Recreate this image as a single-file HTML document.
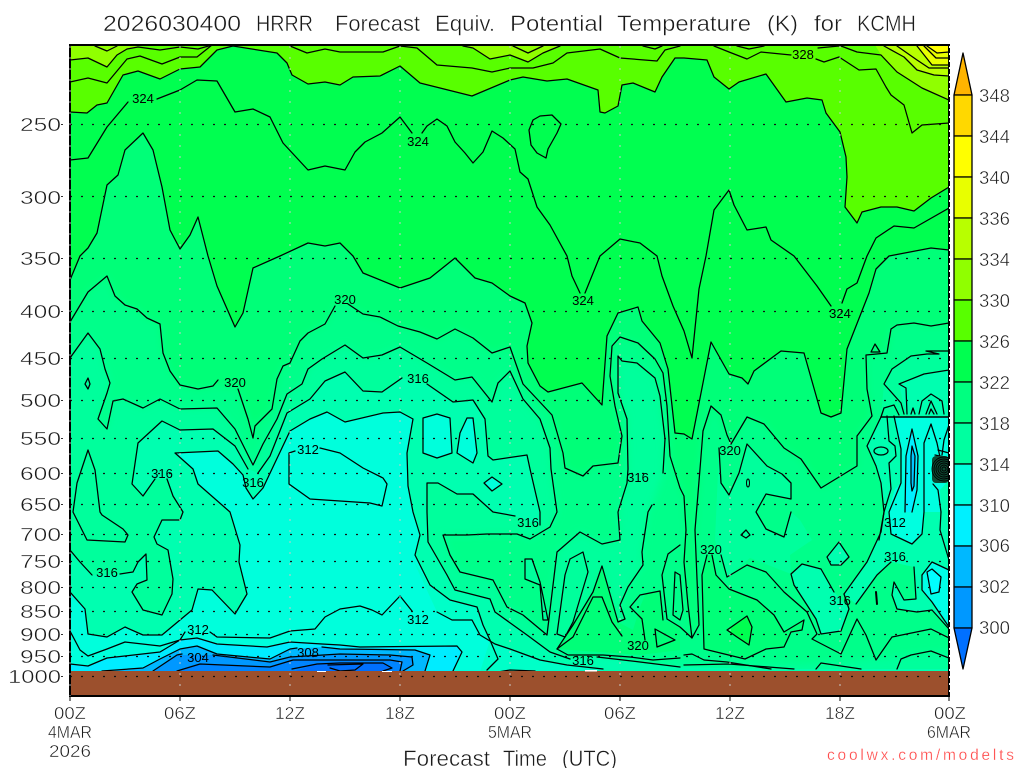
<!DOCTYPE html>
<html><head><meta charset="utf-8"><title>HRRR Forecast</title>
<style>
html,body{margin:0;padding:0;background:#fff;width:1024px;height:768px;overflow:hidden}
svg{display:block}
text{font-family:"Liberation Sans",sans-serif;fill:#1a1a1a}
.t text,text.t{stroke:#fff;stroke-width:.45}
.c{font-size:13px;fill:#000;text-anchor:middle}
.l polyline,.l polygon{fill:none;stroke:#000;stroke-width:1.25;stroke-linejoin:round;stroke-linecap:round}
</style></head><body>
<svg width="1024" height="768" viewBox="0 0 1024 768" xmlns="http://www.w3.org/2000/svg">
<defs><clipPath id="p"><rect x="70" y="45" width="879" height="651"/></clipPath>
<filter id="b" x="-5%" y="-5%" width="110%" height="110%"><feGaussianBlur stdDeviation="4"/></filter></defs>
<rect width="1024" height="768" fill="#fff"/>
<g clip-path="url(#p)">
<rect x="70" y="45" width="879" height="651" fill="#00ffb0"/>
<!-- cyan main -->
<polygon fill="#00ffdc" points="70,592 85,609 88,634 107,637 125,627 143,635 162,635 180,620 192,610 198,589 212,590 235,614 247,594 239,562 240,545 230,512 198,484 193,469 175,453 218,451 233,464 243,475 246,488 253,499 263,488 290,431 310,419 327,412 345,422 383,413 400,412 413,419 407,453 408,486 413,512 420,535 415,555 430,585 450,600 477,607 483,625 490,640 498,659 487,670 500,672 70,672"/>
<polygon fill="#00ffc8" points="413,560 437,612 452,620 472,620 480,635 495,644 510,649 540,660 567,665 603,669 603,672 480,672 490,640 477,607 450,600 430,585"/>
<polygon fill="#00ffdc" points="423,418 437,414 450,418 452,453 437,458 423,453"/>
<polygon fill="#00ffdc" points="457,453 460,433 467,418 473,418 477,453 473,463"/>
<polygon fill="#00ffdc" points="484,483 492,477 502,484 492,491"/>
<!-- warm fills -->
<polygon fill="#00ff9c" points="70,45 70,550 80,562 92,575 120,574 133,572 138,562 146,554 147,580 137,584 132,592 143,610 162,615 172,594 173,579 168,550 157,544 154,537 162,520 180,520 183,512 173,496 167,479 155,479 143,496 132,484 138,443 162,421 180,430 213,429 235,446 248,469 258,473 270,456 287,413 310,399 325,381 345,372 363,391 382,392 402,378 427,384 453,402 473,400 485,419 488,456 493,460 527,455 530,469 540,512 540,525 515,516 493,512 473,494 457,494 438,483 427,483 427,512 428,542 447,575 455,590 490,599 495,612 527,635 550,652 570,659 597,657 640,662 680,667 771,669 949,669 949,45"/>
<g filter="url(#b)">
<polygon fill="#00ff8a" points="60,358 70,358 88,333 100,349 105,369 110,383 107,393 98,419 107,429 113,401 123,399 143,408 160,399 180,409 217,408 235,429 253,465 263,444 277,419 287,394 302,384 308,369 322,359 345,345 363,358 382,355 400,347 427,363 455,380 472,377 492,402 498,383 510,371 523,399 540,419 550,448 551,469 557,512 550,527 530,539 517,534 487,534 467,535 443,535 450,555 460,572 493,580 507,607 523,615 547,635 557,552 580,532 602,544 620,540 618,512 627,483 628,469 627,419 618,393 618,356 622,361 637,363 655,378 660,396 665,439 663,473 652,505 648,512 642,552 643,565 628,587 620,605 625,619 618,622 602,566 593,592 573,625 560,645 568,655 603,655 630,657 653,660 680,658 704,660 745,662 800,665 860,660 960,650 960,35 60,35"/>
<polygon fill="#00ff78" points="60,322 70,322 88,292 107,276 115,296 125,305 137,309 147,318 160,324 163,353 170,371 180,385 198,389 213,386 238,389 248,419 253,438 255,426 272,409 277,379 283,366 290,363 300,341 308,333 325,324 335,306 348,304 363,314 380,317 398,326 420,332 437,339 455,329 473,338 492,353 510,347 523,384 552,415 563,453 565,468 583,476 593,466 618,463 622,436 615,406 610,376 612,346 620,337 638,343 655,359 663,373 667,406 670,456 680,488 684,496 686,530 684,562 688,605 692,638 699,625 697,579 695,530 700,469 703,431 711,406 721,415 727,435 731,444 747,417 764,424 784,448 801,459 821,488 857,466 857,436 872,416 867,389 866,355 887,353 891,329 897,325 914,323 931,326 960,323 960,35 60,35"/>
</g>
<polygon fill="#00ff9c" points="557,634 565,575 570,559 583,552 588,572 573,622 565,637"/>
<polygon fill="#00ff9c" points="525,559 532,559 540,582 548,620 543,620 540,585 525,579"/>
<polygon fill="#00ff50" points="70,280 75,268 80,256 88,248 97,233 107,185 118,175 125,150 143,133 153,150 162,187 170,230 180,249 190,235 198,217 208,256 217,286 235,327 243,313 253,268 280,256 308,243 325,246 340,243 353,256 363,273 400,288 430,278 455,258 475,278 492,283 510,296 525,303 532,323 527,346 528,363 540,386 548,392 582,383 602,405 607,336 618,313 638,307 642,321 660,343 668,369 675,433 684,434 692,439 711,342 729,374 742,378 748,384 754,371 781,351 804,353 821,413 831,417 841,413 847,349 869,293 876,269 887,258 889,256 931,248 949,250 949,45 70,45"/>
<polygon fill="#58ff00" points="70,112 87,113 97,105 107,103 123,75 138,71 160,79 180,69 200,67 217,50 233,46 277,53 287,63 292,75 308,84 325,82 340,85 353,77 380,76 400,66 420,83 472,96 510,80 523,77 547,81 567,79 598,90 600,112 605,113 618,106 622,85 633,83 655,92 662,77 675,58 684,58 707,60 714,77 729,89 739,82 766,74 786,102 807,98 822,100 826,113 840,132 846,157 847,177 845,207 857,223 862,212 881,207 897,207 914,211 931,198 949,187 949,45 70,45"/>
<polygon fill="#90ff00" points="70,45 70,60 88,58 107,67 117,55 127,49 138,47 135,45"/>
<polygon fill="#90ff00" points="463,45 473,48 490,59 510,55 528,62 543,53 560,45"/>
<polygon fill="#90ff00" points="875,45 881,55 897,72 922,88 949,100 949,45"/>
<polygon fill="#b8ff00" points="884,45 904,57 917,70 934,75 949,76 949,45"/>
<polygon fill="#e8ff00" points="917,45 932,65 949,65 949,45"/>
<polygon fill="#ffff00" points="927,45 937,53 949,52 949,45"/>
<!-- right side pale patches -->
<polygon fill="#00ff9c" points="719,450 721,483 729,495 739,473 747,444 767,466 782,474 791,483 791,499 766,494 756,512 766,529 784,537 791,512 800,520 812,540 790,555 791,574 750,558 727,577 715,540"/>
<polygon fill="#00ff78" points="707,555 702,575 704,649 745,659 766,649 784,647 791,632 802,630 804,620 784,632 774,615 757,600 729,589 716,575 712,555"/>
<polygon fill="#00ff50" points="727,630 747,616 752,627 749,645 737,637"/>
<polygon fill="#00ff50" points="655,629 675,640 657,647"/>
<polygon fill="#00ff78" points="557,649 573,625 593,592 602,566 618,622 633,630 640,607 645,595 660,591 663,620 680,627 680,650 640,655 600,652"/>
<polygon fill="#00ff9c" points="884,384 892,369 911,356 949,351 949,417 881,417"/>
<polygon fill="#00ffb0" points="899,384 924,374 949,370 949,417 906,415"/>
<polygon fill="#00ffb0" points="844,594 867,562 881,532 884,512 881,483 876,466 867,446 881,417 949,417 949,629 932,610 917,612 897,609 892,595 894,582 904,600 916,599 914,567 891,562 877,575 856,604"/>
<polygon fill="#00ffb0" points="791,574 802,564 821,569 834,592 849,609 841,631 821,634 816,619 807,605 794,585"/>
<polygon fill="#00ffb0" points="827,557 839,542 849,557 841,565 831,565"/>
<polygon fill="#00ffe0" points="892,417 949,417 949,480 940,490 941,512 924,512 922,534 912,544 891,534 888,512 895,489 901,483 901,449 894,416"/>
<polygon fill="#00f0ff" points="906,456 912,429 918,456 917,490 912,512 905,512"/>
<polygon fill="#00c8ff" points="911,456 912,446 915,456 914,486 912,491 911,483"/>
<polygon fill="#00ffe8" points="922,575 932,562 949,570 949,627 932,602 922,590"/>
<polygon fill="#00ffff" points="927,572 932,569 941,577 939,592 931,594"/>
<!-- cold -->
<polygon fill="#00ecff" points="70,664 88,666 107,658 160,652 180,640 197,638 217,644 267,647 290,642 322,644 340,645 360,647 457,646 462,652 453,672 70,672"/>
<polygon fill="#00b8ff" points="102,672 143,668 160,659 180,649 197,646 217,654 270,659 290,649 322,647 340,649 415,650 430,655 425,672"/>
<polygon fill="#0098ff" points="153,672 177,655 213,655 270,662 290,657 322,655 340,654 390,655 412,657 413,665 403,672"/>
<polygon fill="#0084ff" points="177,672 200,664 270,667 293,660 340,660 390,660 402,662 400,672"/>
<polygon fill="#0070ff" points="292,672 317,664 340,663 383,663 392,668 383,672"/>
<!-- contour lines -->
<g class="l">
<polyline points="95,46 107,51 117,46"/>
<polyline points="70,60 88,58 107,67 117,55 127,49 138,47 160,50 180,47 198,49 212,45"/>
<polyline points="70,82 88,78 107,83 127,59 140,56 162,64 180,57 197,57 212,45"/>
<polyline points="70,112 87,113 97,105 107,103 123,75 138,71 160,79 180,69 200,67 217,50 233,46 277,53 287,63 292,75 308,84 325,82 340,85 353,77 380,76 400,66 420,83 472,96 510,80 523,77 547,81 567,79 598,90 600,112 605,113 618,106 622,85 633,83 655,92 662,77 675,58 684,58 707,60 714,77 729,89 739,82 766,74 786,102 807,98 822,100 826,113 840,132 846,157 847,177 845,207 857,223 862,212 881,207 897,207 914,211 931,198 949,187"/>
<polyline points="290,46 307,53 325,49 340,52 383,52 400,46 417,48 437,65 472,68 492,72 510,68 533,68 553,63 567,53 600,49 620,58 657,61 665,50 680,46"/>
<polyline points="463,46 473,48 490,59 510,55 528,62 543,53 560,46"/>
<polyline points="513,46 528,53 543,46"/>
<polyline points="643,46 655,49 662,46"/>
<polyline points="737,46 749,49 764,46"/>
<polyline points="818,48 839,46"/>
<polyline points="714,46 729,52 747,59 761,52 791,55"/>
<polyline points="816,59 824,62 839,57 859,70 876,69 886,87 891,95 904,105 912,133 922,125 949,123"/>
<polyline points="841,46 857,52 881,55 897,72 922,88 949,100"/>
<polyline points="884,46 904,57 917,70 934,75 949,76"/>
<polyline points="897,46 917,60 929,68 949,68"/>
<polyline points="917,46 932,65 949,65"/>
<polyline points="924,46 936,58 949,58"/>
<polyline points="927,46 937,53 949,52"/>
<polyline points="70,160 88,158 107,127 128,102"/>
<polyline points="157,99 180,90 197,80 217,81 235,112 253,109 270,117 283,143 308,170 325,166 345,170 355,152 365,142 382,133 400,117 412,133"/>
<polyline points="422,133 427,126 437,119 447,126 455,142 465,153 473,163 483,152 492,131 503,138 515,149 520,172 528,179 537,207 550,225 567,256 572,276 580,293"/>
<polyline points="585,293 600,256 620,239 640,243 657,256 662,276 673,306 684,331 692,358 699,289 706,256 714,210 729,190 734,205 747,230 766,227 771,240 794,256 817,286 831,306"/>
<polyline points="842,303 847,289 857,283 867,256 876,238 894,226 914,228 949,208"/>
<polygon points="540,116 552,115 561,124 557,133 548,149 546,158 537,153 531,145 529,130 533,120"/>
<polyline points="70,280 75,268 80,256 88,248 97,233 107,185 118,175 125,150 143,133 153,150 162,187 170,230 180,249 190,235 198,217 208,256 217,286 235,327 243,313 253,268 280,256 308,243 325,246 340,243 353,256 363,273 400,288 430,278 455,258 475,278 492,283 510,296 525,303 532,323 527,346 528,363 540,386 548,392 582,383 602,405 607,336 618,313 638,307 642,321 660,343 668,369 675,433 684,434 692,439 711,342 729,374 742,378 748,384 754,371 781,351 804,353 821,413 831,417 841,413 847,349 869,293 876,269 887,258 889,256 931,248 949,250"/>
<polyline points="70,322 88,292 107,276 115,296 125,305 137,309 147,318 160,324 163,353 170,371 180,385 198,389 213,386 218,380"/>
<polyline points="238,389 248,419 253,438 255,426 272,409 277,379 283,366 290,363 300,341 308,333 325,324 335,306"/>
<polyline points="348,304 363,314 380,317 398,326 420,332 437,339 455,329 473,338 492,353 510,347 523,384 552,415 563,453 565,468 583,476 593,466 618,463 622,436 615,406 610,376 612,346 620,337 638,343 655,359 663,373 667,406 670,456 680,488 684,496 686,530 684,562 688,605 692,638 699,625 697,579 695,530 700,469 703,431 711,406 721,415 727,435 731,444"/>
<polyline points="731,444 747,417 764,424 784,448 801,459 821,488 857,466 857,436 872,416 867,389 866,355 887,353 891,329 897,325 914,323 931,326 949,323"/>
<polyline points="70,358 88,333 100,349 105,369 110,383 107,393 98,419 107,429 113,401 123,399 143,408 160,399 180,409 217,408 235,429 253,465 263,444 277,419 287,394 302,384 308,369 322,359 345,345 363,358 382,355 400,347 427,363 455,380 472,377 492,402 498,383 510,371 523,399 540,419 550,448 551,469 557,512 550,527 530,539 517,534 487,534 467,535 443,535 450,555 460,572 493,580 507,607 523,615 547,635 557,552 580,532 602,544 620,540 618,512 627,483 628,469 627,419 618,393 618,356 622,361 637,363 655,378 660,396 665,439 663,473"/>
<polyline points="652,505 648,512 642,552 643,565 628,587 620,605 625,619 618,622 602,566 593,592 573,625 557,649 568,655 603,655 630,657 653,660 680,658"/>
<polyline points="70,550 80,562 92,575"/>
<polyline points="120,574 133,572 138,562 146,554 147,580 137,584 132,592 143,610 162,615 172,594 173,579 168,550 157,544 154,537 162,520 180,520 183,512 173,496 167,479"/>
<polyline points="155,479 143,496 132,484 138,443 162,421 180,430 213,429 235,446 248,469"/>
<polyline points="258,473 270,456 287,413 310,399 325,381 345,372 363,391 382,392 402,378"/>
<polyline points="427,384 453,402 473,400 485,419 488,456 493,460 527,455 530,469 540,512 540,525"/>
<polyline points="515,516 493,512 473,494 457,494 438,483 427,483 427,512 428,542 447,575 455,590 490,599 495,612 527,635 550,652 570,659"/>
<polyline points="597,657 640,662 680,667"/>
<polygon points="557,634 565,575 570,559 583,552 588,572 573,622 565,637"/>
<polygon points="525,559 532,559 540,582 548,620 543,620 540,585 525,579"/>
<polyline points="70,592 85,609 88,634 107,637 125,627 143,635 162,635 180,620 192,610 198,589 212,590 235,614 247,594 239,562 240,545 230,512 198,484 193,469 175,453 218,451 233,464 243,475 246,488 253,499 263,488 290,431 310,419 327,412 345,422 383,413 400,412 413,419 407,453 408,486 413,512 420,535 415,555 430,585 450,600 477,607 483,625 490,640 498,659 487,670"/>
<polygon points="423,418 437,414 450,418 452,453 437,458 423,453"/>
<polygon points="457,453 460,433 467,418 473,418 477,453 473,463"/>
<polygon points="484,483 492,477 502,484 492,491"/>
<polygon points="498,672 510,670 535,671"/>
<polyline points="295,451 289,453 289,484 310,499 340,501 370,503 382,506 387,484 383,478 363,468 340,453 320,448"/>
<polygon points="88,378 90,384 88,389 85,384"/>
<polygon points="88,450 77,483 73,512 87,540 125,542 128,535 123,529 102,515 100,512 95,470"/>
<polyline points="70,631 80,650 88,656 107,649 125,642 160,646 180,640 185,632"/>
<polyline points="210,632 217,637 270,638 290,631 315,629 325,617 340,609 360,606 372,610 382,615 400,596 412,611"/>
<polyline points="437,612 452,620 472,620 480,635 495,644 510,649 540,660 567,665 603,669"/>
<polyline points="70,664 88,666 107,658 160,652 180,640 197,638 217,644 267,647 290,642 322,644 340,645 360,647 457,646 462,652 453,671"/>
<polyline points="102,671 143,668 160,659 180,649 197,646 217,654 270,659 290,649 297,648"/>
<polyline points="322,647 340,649 415,650 430,655 425,671"/>
<polyline points="153,671 177,655 182,654"/>
<polyline points="213,655 270,662 290,657 340,654 390,655 412,657 413,665 403,671"/>
<polyline points="177,671 200,664 270,667 293,660 340,660 390,660 402,662 400,671"/>
<polyline points="292,669 317,664 340,663 383,663 392,668 383,671"/>
<polyline points="328,665 363,664 355,670 340,671 330,668" />
<!-- right complex -->
<polygon points="871,352 875,344 880,352"/>
<polyline points="881,417 884,408 894,405 899,415"/>
<polyline points="881,417 949,417" style="stroke-width:1.6"/>
<polyline points="904,414 901,403 884,384 892,369 911,356 927,354 939,354 926,351 949,351"/>
<polyline points="907,414 906,388 899,384 924,374 949,370"/>
<polyline points="919,414 922,401 931,394 942,401 944,414"/>
<polyline points="926,414 931,401 937,414"/>
<polyline points="929,414 931,409 934,414"/>
<polyline points="911,414 913,408 915,414"/>
<polyline points="881,417 867,446 876,466 881,483 884,512 881,532 867,562 844,594"/>
<ellipse cx="881" cy="451" rx="7" ry="4" fill="none" stroke="#000" stroke-width="1.25"/>
<polyline points="887,416 889,441 895,446 896,456 889,463 891,489 884,512 879,540"/>
<polyline points="894,416 901,449 901,483 889,512 891,534 912,544 922,534 924,512 924,443 931,424 937,443 941,462"/>
<polyline points="905,512 906,456 912,429 918,456 917,490 912,512"/>
<polygon points="911,456 912,446 915,456 914,486 912,491 911,483"/>
<polyline points="941,512 938,490 933,484"/>
<polyline points="949,425 944,440 942,455"/>
<polyline points="935,455 949,458"/>
<polyline points="938,450 949,453"/>
<polyline points="856,604 877,575 891,562"/>
<polyline points="914,567 916,599 904,600 894,582 892,595 897,609 917,612 932,610 949,629"/>
<polyline points="941,512 940,530 949,560"/>
<polyline points="844,594 849,609 841,631 821,634 816,619 807,605 794,585 791,574 802,564 821,569 834,592"/>
<polygon points="827,557 839,542 849,557 841,565 831,565"/>
<polygon points="741,535 746,530 750,535 746,538"/>
<ellipse cx="748" cy="483" rx="1.5" ry="4" fill="none" stroke="#000" stroke-width="1"/>
<polyline points="922,575 932,562 949,570"/>
<polyline points="949,627 932,602 922,590 922,575"/>
<polygon points="927,572 932,569 941,577 939,592 931,594"/>
<polyline points="876,592 877,604" style="stroke-width:2"/>
<polyline points="719,448 721,483 729,495 739,473 747,444 767,466 782,474 791,483 791,499 766,494 756,512 766,529 784,537 791,512"/>
<polyline points="721,555 727,577 747,565 766,572 784,592 807,612 817,634 812,639 841,654 857,619 866,635 876,660 892,637 931,629 949,638"/>
<polyline points="707,555 702,575 704,649 745,659 766,649 784,647 791,632 802,630 804,620 784,632 774,615 757,600 729,589 716,575 712,555"/>
<polygon points="727,630 747,616 752,627 749,645 737,637"/>
<polygon points="655,629 675,640 657,647"/>
<polyline points="680,545 668,554 662,575 667,619 680,627 692,638"/>
<polyline points="675,572 673,615 680,620 683,610 680,575 675,572"/>
<polyline points="630,607 640,595 660,591 663,620"/>
<polyline points="630,607 642,619 645,640"/>
<polyline points="557,649 573,637 593,597 602,597 612,622 622,636"/>
<polyline points="684,655 692,654 704,660 727,662 771,669"/>
<polyline points="684,665 729,664 794,669"/>
<polyline points="816,669 821,663 861,669"/>
<polyline points="897,669 901,659 911,655 931,651 949,658"/>
<circle cx="638" cy="607" r="1" fill="#000"/>
<!-- dense blob -->
<rect x="932" y="456" width="17" height="27" rx="4" fill="#0d4a32" stroke="none"/>
<g fill="none" stroke="#000" stroke-width=".9">
<circle cx="944" cy="469" r="2"/><circle cx="944" cy="469" r="4"/><circle cx="944" cy="469" r="6"/><circle cx="944" cy="469" r="8"/><circle cx="944" cy="469" r="10"/><circle cx="944" cy="469" r="12"/>
</g>
</g>
</g>
<!-- ground -->
<rect x="70" y="671" width="879" height="25" fill="#9c502d"/>
<rect x="317" y="671" width="9" height="1" fill="#fff"/><rect x="382" y="671" width="10" height="1" fill="#fff"/><rect x="585" y="670" width="12" height="1.5" fill="#fff"/>
<!-- grid -->
<g stroke="#111" stroke-width="1.2" stroke-dasharray="2 9" fill="none">
<path d="M70 124.5H949M70 196.5H949M70 258.5H949M70 311.5H949M70 358.5H949M70 400.5H949M70 438.5H949M70 473.5H949M70 504.5H949M70 534.5H949M70 561.5H949M70 587.5H949M70 611.5H949M70 634.5H949M70 656.5H949M70 676.5H949"/>
</g>
<g stroke="#c8c8c8" stroke-width="1" stroke-dasharray="2 9" fill="none">
<path d="M180 46V696M290 46V696M400 46V696M510 46V696M620 46V696M730 46V696M840 46V696"/>
</g>
<!-- frame -->
<rect x="69" y="44" width="881" height="2" fill="#000"/>
<rect x="69" y="695" width="881" height="2" fill="#000"/>
<rect x="69" y="44" width="2" height="653" fill="#000"/>
<rect x="948" y="44" width="2" height="653" fill="#000"/>
<path d="M70 46V696" stroke="#aaa" stroke-width="1" stroke-dasharray="2 9"/>
<path d="M949.500 46V696" stroke="#fff" stroke-width="1" stroke-dasharray="2 5"/>
<!-- x ticks -->
<path d="M70 697v4M180 697v4M290 697v4M400 697v4M510 697v4M620 697v4M730 697v4M840 697v4M949 697v4" stroke="#000" stroke-width="1"/>
<!-- y ticks -->
<g fill="#333"><rect x="61" y="124" width="2" height="1"/><rect x="61" y="196" width="2" height="1"/><rect x="61" y="258" width="2" height="1"/><rect x="61" y="311" width="2" height="1"/><rect x="61" y="358" width="2" height="1"/><rect x="61" y="400" width="2" height="1"/><rect x="61" y="438" width="2" height="1"/><rect x="61" y="473" width="2" height="1"/><rect x="61" y="504" width="2" height="1"/><rect x="61" y="534" width="2" height="1"/><rect x="61" y="561" width="2" height="1"/><rect x="61" y="587" width="2" height="1"/><rect x="61" y="611" width="2" height="1"/><rect x="61" y="634" width="2" height="1"/><rect x="61" y="656" width="2" height="1"/><rect x="61" y="676" width="2" height="1"/></g>
<!-- contour labels -->
<text class="c" x="143" y="103">324</text>
<text class="c" x="418" y="146">324</text>
<text class="c" x="583" y="305">324</text>
<text class="c" x="840" y="318">324</text>
<text class="c" x="803" y="59">328</text>
<text class="c" x="345" y="304">320</text>
<text class="c" x="235" y="387">320</text>
<text class="c" x="418" y="383">316</text>
<text class="c" x="162" y="478">316</text>
<text class="c" x="253" y="487">316</text>
<text class="c" x="308" y="454">312</text>
<text class="c" x="730" y="455">320</text>
<text class="c" x="638" y="482">316</text>
<text class="c" x="528" y="527">316</text>
<text class="c" x="895" y="527">312</text>
<text class="c" x="711" y="554">320</text>
<text class="c" x="895" y="561">316</text>
<text class="c" x="107" y="577">316</text>
<text class="c" x="840" y="605">316</text>
<text class="c" x="418" y="624">312</text>
<text class="c" x="198" y="634">312</text>
<text class="c" x="638" y="650">320</text>
<text class="c" x="198" y="662">304</text>
<text class="c" x="308" y="657">308</text>
<text class="c" x="583" y="665">316</text>
<!-- title -->
<g class="t" font-size="22.500">
<text x="103" y="31" textLength="138" lengthAdjust="spacingAndGlyphs">2026030400</text>
<text x="256" y="31" textLength="57" lengthAdjust="spacingAndGlyphs">HRRR</text>
<text x="335" y="31" textLength="85" lengthAdjust="spacingAndGlyphs">Forecast</text>
<text x="435" y="31" textLength="60" lengthAdjust="spacingAndGlyphs">Equiv.</text>
<text x="510" y="31" textLength="93" lengthAdjust="spacingAndGlyphs">Potential</text>
<text x="617" y="31" textLength="134" lengthAdjust="spacingAndGlyphs">Temperature</text>
<text x="767" y="31" textLength="31" lengthAdjust="spacingAndGlyphs">(K)</text>
<text x="814" y="31" textLength="28" lengthAdjust="spacingAndGlyphs">for</text>
<text x="857" y="31" textLength="59" lengthAdjust="spacingAndGlyphs">KCMH</text>
</g>
<!-- y labels -->
<g class="t" font-size="18.500" >
<text x="20" y="131" textLength="41" lengthAdjust="spacingAndGlyphs">250</text>
<text x="20" y="204" textLength="41" lengthAdjust="spacingAndGlyphs">300</text>
<text x="20" y="265" textLength="41" lengthAdjust="spacingAndGlyphs">350</text>
<text x="20" y="318" textLength="41" lengthAdjust="spacingAndGlyphs">400</text>
<text x="20" y="365" textLength="41" lengthAdjust="spacingAndGlyphs">450</text>
<text x="20" y="407" textLength="41" lengthAdjust="spacingAndGlyphs">500</text>
<text x="20" y="445" textLength="41" lengthAdjust="spacingAndGlyphs">550</text>
<text x="20" y="480" textLength="41" lengthAdjust="spacingAndGlyphs">600</text>
<text x="20" y="511" textLength="41" lengthAdjust="spacingAndGlyphs">650</text>
<text x="20" y="541" textLength="41" lengthAdjust="spacingAndGlyphs">700</text>
<text x="20" y="568" textLength="41" lengthAdjust="spacingAndGlyphs">750</text>
<text x="20" y="594" textLength="41" lengthAdjust="spacingAndGlyphs">800</text>
<text x="20" y="618" textLength="41" lengthAdjust="spacingAndGlyphs">850</text>
<text x="20" y="641" textLength="41" lengthAdjust="spacingAndGlyphs">900</text>
<text x="20" y="663" textLength="41" lengthAdjust="spacingAndGlyphs">950</text>
<text x="8" y="683" textLength="53" lengthAdjust="spacingAndGlyphs">1000</text>
</g>
<!-- x labels -->
<g class="t" font-size="17.500">
<text x="54" y="719" textLength="32" lengthAdjust="spacingAndGlyphs">00Z</text>
<text x="164" y="719" textLength="32" lengthAdjust="spacingAndGlyphs">06Z</text>
<text x="275" y="719" textLength="30" lengthAdjust="spacingAndGlyphs">12Z</text>
<text x="385" y="719" textLength="30" lengthAdjust="spacingAndGlyphs">18Z</text>
<text x="494" y="719" textLength="32" lengthAdjust="spacingAndGlyphs">00Z</text>
<text x="604" y="719" textLength="32" lengthAdjust="spacingAndGlyphs">06Z</text>
<text x="715" y="719" textLength="30" lengthAdjust="spacingAndGlyphs">12Z</text>
<text x="825" y="719" textLength="30" lengthAdjust="spacingAndGlyphs">18Z</text>
<text x="934" y="719" textLength="32" lengthAdjust="spacingAndGlyphs">00Z</text>
<text x="48" y="738" textLength="44" lengthAdjust="spacingAndGlyphs">4MAR</text>
<text x="49" y="757" textLength="42" lengthAdjust="spacingAndGlyphs">2026</text>
<text x="488" y="738" textLength="44" lengthAdjust="spacingAndGlyphs">5MAR</text>
<text x="927" y="738" textLength="44" lengthAdjust="spacingAndGlyphs">6MAR</text>
</g>
<g class="t" font-size="22">
<text x="403" y="766" textLength="87" lengthAdjust="spacingAndGlyphs">Forecast</text>
<text x="503" y="766" textLength="44" lengthAdjust="spacingAndGlyphs">Time</text>
<text x="562" y="766" textLength="55" lengthAdjust="spacingAndGlyphs">(UTC)</text>
</g>
<text class="t" x="827" y="760" font-size="15.500" textLength="187" lengthAdjust="spacing" style="fill:#ff4a4a;stroke-width:.25">coolwx.com/modelts</text>
<!-- colorbar -->
<g stroke="#000" stroke-width="1.300" stroke-linejoin="round">
<polygon fill="#ffb400" points="954,95 972,95 963,53"/>
<rect x="954" y="95" width="18" height="41" fill="#ffd800"/>
<rect x="954" y="136" width="18" height="41" fill="#ffff00"/>
<rect x="954" y="177" width="18" height="41" fill="#e8ff00"/>
<rect x="954" y="218" width="18" height="41" fill="#b8ff00"/>
<rect x="954" y="259" width="18" height="41" fill="#90ff00"/>
<rect x="954" y="300" width="18" height="41" fill="#58ff00"/>
<rect x="954" y="341" width="18" height="41" fill="#00ff50"/>
<rect x="954" y="382" width="18" height="41" fill="#00ff80"/>
<rect x="954" y="423" width="18" height="41" fill="#00ffa0"/>
<rect x="954" y="464" width="18" height="41" fill="#00ffdc"/>
<rect x="954" y="505" width="18" height="41" fill="#00f0ff"/>
<rect x="954" y="546" width="18" height="41" fill="#00b8ff"/>
<rect x="954" y="587" width="18" height="41" fill="#0098ff"/>
<polygon fill="#0070ff" points="954,628 972,628 963,669"/>
</g>
<g class="t" font-size="18.500">
<text x="979" y="102" textLength="31" lengthAdjust="spacingAndGlyphs">348</text>
<text x="979" y="143" textLength="31" lengthAdjust="spacingAndGlyphs">344</text>
<text x="979" y="184" textLength="31" lengthAdjust="spacingAndGlyphs">340</text>
<text x="979" y="225" textLength="31" lengthAdjust="spacingAndGlyphs">336</text>
<text x="979" y="266" textLength="31" lengthAdjust="spacingAndGlyphs">334</text>
<text x="979" y="307" textLength="31" lengthAdjust="spacingAndGlyphs">330</text>
<text x="979" y="348" textLength="31" lengthAdjust="spacingAndGlyphs">326</text>
<text x="979" y="389" textLength="31" lengthAdjust="spacingAndGlyphs">322</text>
<text x="979" y="430" textLength="31" lengthAdjust="spacingAndGlyphs">318</text>
<text x="979" y="471" textLength="31" lengthAdjust="spacingAndGlyphs">314</text>
<text x="979" y="512" textLength="31" lengthAdjust="spacingAndGlyphs">310</text>
<text x="979" y="552" textLength="31" lengthAdjust="spacingAndGlyphs">306</text>
<text x="979" y="593" textLength="31" lengthAdjust="spacingAndGlyphs">302</text>
<text x="979" y="634" textLength="31" lengthAdjust="spacingAndGlyphs">300</text>
</g>
</svg>
</body></html>
